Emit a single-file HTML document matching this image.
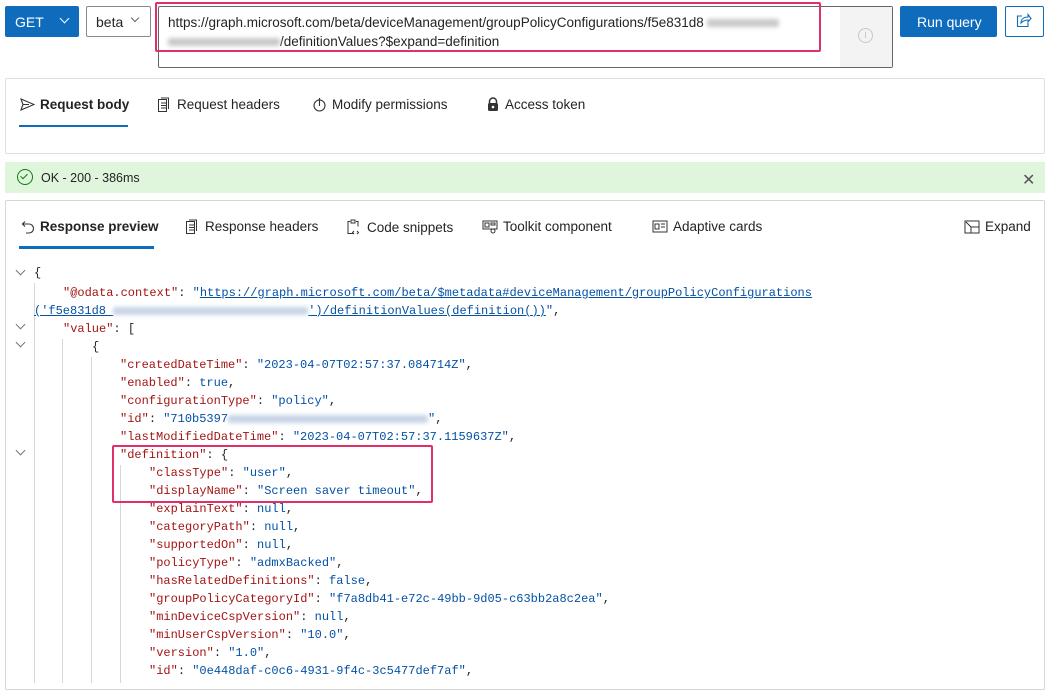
<!DOCTYPE html>
<html><head><meta charset="utf-8"><style>
*{box-sizing:border-box;margin:0;padding:0}
body{width:1053px;height:680px;background:#fff;position:relative;overflow:hidden;font-family:"Liberation Sans",sans-serif;color:#242424;font-size:14px}
.a{position:absolute}
.btn{position:absolute;border-radius:2px}
.tab{position:absolute;font-size:13.5px;color:#242424;white-space:nowrap;display:flex;align-items:center;gap:5px}
.tab svg{flex:none}
.code{position:absolute;font-family:"Liberation Mono",monospace;font-size:12px;white-space:pre;line-height:18px;color:#242424}
.k{color:#a31515}.v{color:#0451a5}
.blur{display:inline-block;height:8px;background:#c9c9cc;filter:blur(2px);vertical-align:middle;border-radius:2px}
.bb{background:#c7d4e6}
.g{position:absolute;width:1px;background:#d6d6d6}
.chev{position:absolute;left:17px;width:7px;height:7px;border-right:1px solid #777;border-bottom:1px solid #777;transform:rotate(45deg)}
</style></head><body>

<div class="btn" style="left:5px;top:6px;width:74px;height:31px;background:#0f6cbd"></div>
<div class="a" style="left:15px;top:14px;color:#fff;font-size:14px">GET</div>
<div class="a" style="left:61px;top:15px;width:7px;height:7px;border-right:1.3px solid #fff;border-bottom:1.3px solid #fff;transform:rotate(45deg)"></div>

<div class="btn" style="left:86px;top:6px;width:65px;height:31px;border:1px solid #8a8a8a"></div>
<div class="a" style="left:96px;top:14px;font-size:14px">beta</div>
<div class="a" style="left:132px;top:15px;width:6px;height:6px;border-right:1px solid #666;border-bottom:1px solid #666;transform:rotate(45deg)"></div>

<div class="a" style="left:158px;top:6px;width:735px;height:62px;border:1px solid #666;border-radius:2px"></div>
<div class="a" style="left:840px;top:7px;width:52px;height:60px;background:#f3f3f3"></div>
<div class="a" style="left:858px;top:28px;width:15px;height:15px;border:1px solid #c8c8c8;border-radius:50%"></div>
<div class="a" style="left:865px;top:32px;width:1px;height:6px;background:#c8c8c8"></div>
<div class="a" style="left:168px;top:13px;font-size:13.5px;line-height:19px;white-space:nowrap">https://graph.microsoft.com/beta/deviceManagement/groupPolicyConfigurations/f5e831d8<span class="blur" style="width:72px;margin-left:3px"></span><br><span class="blur" style="width:112px"></span>/definitionValues?$expand=definition</div>
<div class="a" style="left:155px;top:2px;width:666px;height:50px;border:2.5px solid #e0306a;border-radius:2px"></div>

<div class="btn" style="left:900px;top:6px;width:97px;height:31px;background:#0f6cbd"></div>
<div class="a" style="left:917px;top:14px;color:#fff;font-size:14px">Run query</div>
<div class="btn" style="left:1005px;top:6px;width:39px;height:31px;border:1px solid #0f6cbd"></div>
<svg class="a" style="left:1016px;top:13px" width="16" height="15" viewBox="0 0 16 15" fill="none" stroke="#0f6cbd" stroke-width="1.1"><path d="M6 3H1.5V13.5H12V10"/><path d="M5 10c0-4 3-6 7-6V1.5L15 5.5 12 9V7c-3 0-5 1-7 3z"/></svg>

<!-- request panel -->
<div class="a" style="left:5px;top:78px;width:1040px;height:76px;border:1px solid #e0e0e0;border-radius:2px"></div>
<div class="tab" style="left:20px;top:97px;font-weight:bold"><svg width="15" height="13" viewBox="0 0 15 13" fill="none" stroke="#333" stroke-width="1.1"><path d="M1 1l13 5.5L1 12l2-5.5z M3 6.5h6"/></svg>Request body</div>
<div class="a" style="left:19px;top:125px;width:109px;height:2px;background:#0f6cbd"></div>
<div class="tab" style="left:157px;top:97px"><svg width="15" height="15" viewBox="0 0 15 15" fill="none" stroke="#333" stroke-width="1"><path d="M1.5 2.5h8v12h-8z M4 1h7.5v11 M4 6h5M4 8.5h5M4 11h5"/></svg>Request headers</div>
<div class="tab" style="left:312px;top:97px"><svg width="15" height="15" viewBox="0 0 15 15" fill="none" stroke="#333" stroke-width="1.1"><circle cx="7.5" cy="8.5" r="5.5"/><path d="M7.5 1v8M5.5 3h4"/></svg>Modify permissions</div>
<div class="tab" style="left:486px;top:97px"><svg width="14" height="15" viewBox="0 0 14 15"><path d="M3.5 6V4.5a3.5 3.5 0 017 0V6" fill="none" stroke="#333" stroke-width="1.5"/><rect x="2" y="6" width="10" height="8" rx="1.5" fill="#333"/><circle cx="7" cy="10" r="1.3" fill="#fff"/></svg>Access token</div>

<!-- status -->
<div class="a" style="left:5px;top:162px;width:1040px;height:31px;background:#dff6dd"></div>
<div class="a" style="left:17px;top:169px;width:16px;height:16px;border:1.2px solid #107c10;border-radius:50%"></div>
<div class="a" style="left:22px;top:172px;width:4px;height:7px;border-right:1.2px solid #107c10;border-bottom:1.2px solid #107c10;transform:rotate(45deg)"></div>
<div class="a" style="left:41px;top:171px;font-size:12.5px">OK - 200 - 386ms</div>
<div class="a" style="left:1022px;top:170px;font-size:16px;color:#555">✕</div>

<!-- response panel -->
<div class="a" style="left:5px;top:200px;width:1040px;height:490px;border:1px solid #d6d6d6;border-radius:2px"></div>
<div class="tab" style="left:21px;top:219px;font-weight:bold"><svg width="14" height="14" viewBox="0 0 14 14" fill="none" stroke="#333" stroke-width="1.1"><path d="M4 1.5L1.5 4 4 6.5M1.5 4H8a4.5 4.5 0 010 9H5"/></svg>Response preview</div>
<div class="a" style="left:19px;top:246px;width:135px;height:2.5px;background:#0f6cbd"></div>
<div class="tab" style="left:185px;top:219px"><svg width="15" height="15" viewBox="0 0 15 15" fill="none" stroke="#333" stroke-width="1"><path d="M1.5 2.5h8v12h-8z M4 1h7.5v11 M4 6h5M4 8.5h5M4 11h5"/></svg>Response headers</div>
<div class="tab" style="left:346px;top:219px"><svg width="16" height="16" viewBox="0 0 16 16" fill="none" stroke="#333" stroke-width="1"><path d="M4 2.5H2v12h6 M10 2.5h2v5 M5 1h4v3H5z M8 12l-1.5 1.5L8 15 M11 12l1.5 1.5L11 15"/></svg>Code snippets</div>
<div class="tab" style="left:482px;top:219px"><svg width="16" height="14" viewBox="0 0 16 14" fill="none" stroke="#333" stroke-width="1"><path d="M1 1h14v8H1z M3 3h4v4H3z M9 3h4v2H9z"/><circle cx="11" cy="11" r="2"/></svg>Toolkit component</div>
<div class="tab" style="left:652px;top:219px"><svg width="16" height="13" viewBox="0 0 16 13" fill="none" stroke="#333" stroke-width="1"><path d="M1 1h14v11H1z M3 4h4v5H3z M9 4h4M9 7h4"/></svg>Adaptive cards</div>
<div class="tab" style="left:964px;top:219px"><svg width="16" height="14" viewBox="0 0 16 14" fill="none" stroke="#333" stroke-width="1"><path d="M1 1h14v12H1z M7 7h8 M7 7v6 M2 2l5 5"/></svg>Expand</div>

<!-- guides -->
<div class="g" style="left:34px;top:283px;height:400px"></div>
<div class="g" style="left:62px;top:339px;height:344px"></div>
<div class="g" style="left:91px;top:357px;height:326px"></div>
<div class="g" style="left:120px;top:465px;height:218px"></div>

<div class="chev" style="top:267px"></div>
<div class="chev" style="top:321px"></div>
<div class="chev" style="top:339px"></div>
<div class="chev" style="top:447px"></div>

<div class="code" style="left:34px;top:264px">{</div>
<div class="code" style="left:63px;top:284px"><span class="k">"@odata.context"</span>: <span class="v">"<u>https://graph.microsoft.com/beta/$metadata#deviceManagement/groupPolicyConfigurations</u></span></div>
<div class="code" style="left:34px;top:302px"><span class="v"><u>('f5e831d8 <span class="blur bb" style="width:195px"></span>')/definitionValues(definition())</u>"</span>,</div>
<div class="code" style="left:63px;top:320px"><span class="k">"value"</span>: [</div>
<div class="code" style="left:92px;top:338px">{</div>
<div class="code" style="left:120px;top:356px"><span class="k">"createdDateTime"</span>: <span class="v">"2023-04-07T02:57:37.084714Z"</span>,
<span class="k">"enabled"</span>: <span class="v">true</span>,
<span class="k">"configurationType"</span>: <span class="v">"policy"</span>,
<span class="k">"id"</span>: <span class="v">"710b5397<span class="blur bb" style="width:200px"></span>"</span>,
<span class="k">"lastModifiedDateTime"</span>: <span class="v">"2023-04-07T02:57:37.1159637Z"</span>,
<span class="k">"definition"</span>: {</div>
<div class="code" style="left:149px;top:464px"><span class="k">"classType"</span>: <span class="v">"user"</span>,
<span class="k">"displayName"</span>: <span class="v">"Screen saver timeout"</span>,
<span class="k">"explainText"</span>: <span class="v">null</span>,
<span class="k">"categoryPath"</span>: <span class="v">null</span>,
<span class="k">"supportedOn"</span>: <span class="v">null</span>,
<span class="k">"policyType"</span>: <span class="v">"admxBacked"</span>,
<span class="k">"hasRelatedDefinitions"</span>: <span class="v">false</span>,
<span class="k">"groupPolicyCategoryId"</span>: <span class="v">"f7a8db41-e72c-49bb-9d05-c63bb2a8c2ea"</span>,
<span class="k">"minDeviceCspVersion"</span>: <span class="v">null</span>,
<span class="k">"minUserCspVersion"</span>: <span class="v">"10.0"</span>,
<span class="k">"version"</span>: <span class="v">"1.0"</span>,
<span class="k">"id"</span>: <span class="v">"0e448daf-c0c6-4931-9f4c-3c5477def7af"</span>,</div>

<div class="a" style="left:112px;top:445px;width:321px;height:58px;border:2.5px solid #e0306a;border-radius:2px"></div>
</body></html>
